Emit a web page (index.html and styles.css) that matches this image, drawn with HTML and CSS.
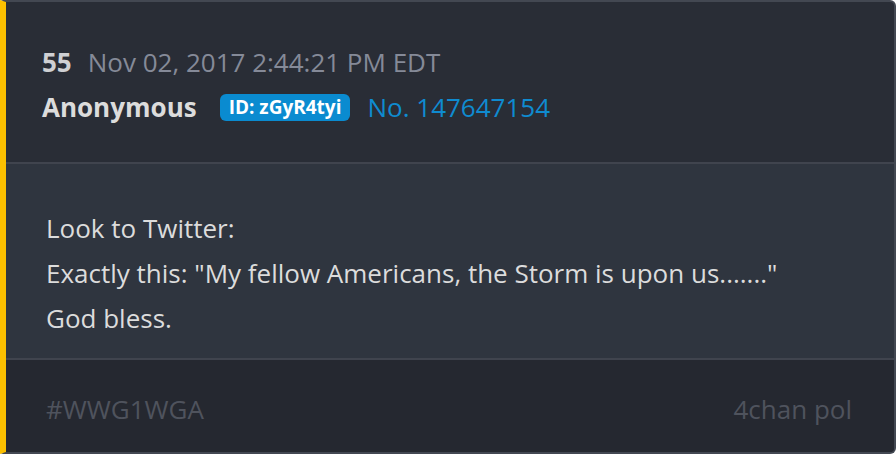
FILE: index.html
```html
<!DOCTYPE html>
<html>
<head>
<meta charset="utf-8">
<link rel="stylesheet" href="styles.css">
</head>
<body>
<div class="card">
  <div class="head">
    <div class="row1"><span class="num">55</span><span class="date">Nov 02, 2017 2:44:21 PM EDT</span></div>
    <div class="row2"><span class="name">Anonymous</span><span class="badge">ID: zGyR4tyi</span><span class="no">No. 147647154</span></div>
  </div>
  <div class="body">
    <p>Look to Twitter:</p>
    <p>Exactly this: "My fellow Americans, the Storm is upon us......."</p>
    <p>God bless.</p>
  </div>
  <div class="foot">
    <span class="tag">#WWG1WGA</span>
    <span class="src">4chan pol</span>
  </div>
</div>
</body>
</html>
```
FILE: styles.css
```css
html, body { margin: 0; padding: 0; background: #ffffff; }
body { width: 896px; height: 454px; overflow: hidden; font-family: "Open Sans", sans-serif; }
.card {
  box-sizing: border-box;
  width: 896px; height: 454px;
  border: 2px solid #434852;
  border-left: 6px solid #fcc000;
  border-radius: 0 6px 6px 0;
  background: #292d36;
  display: flex; flex-direction: column;
  overflow: hidden;
}
.head {
  height: 162px; box-sizing: border-box;
  padding: 42px 0 0 36px;
  border-bottom: 2px solid #40444e;
}
.row1 { display: flex; align-items: baseline; font-size: 26px; line-height: 36px; }
.num { font-weight: 700; color: #cfd0d3; margin-right: 16px; }
.date { color: #858a98; }
.row2 { display: flex; align-items: center; font-size: 26px; line-height: 36px; margin-top: 9px; }
.name { font-weight: 700; color: #dcdcdc; margin-right: 23px; }
.badge { background: #0a8bd0; color: #fff; font-weight: 700; font-size: 19px; line-height: 27px; padding: 0 9px; border-radius: 6px; margin-right: 17px; }
.no { color: #0f8bd0; }
.body {
  background: #2f353f;
  height: 196px; box-sizing: border-box;
  padding: 42px 0 0 40px;
  border-bottom: 2px solid #40444e;
}
.body p { margin: 0; font-size: 26px; line-height: 45px; color: #dcdcdc; }
.foot {
  flex: 1; background: #252830;
  display: flex; justify-content: space-between; align-items: center;
  padding: 6px 42px 0 40px;
  font-size: 26px; color: #4f535d;
}
```
